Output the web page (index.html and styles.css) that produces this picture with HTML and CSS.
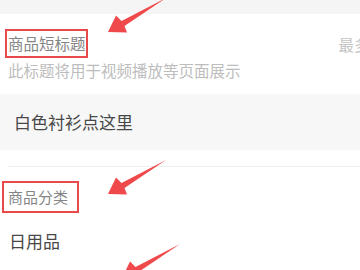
FILE: index.html
```html
<!DOCTYPE html>
<html lang="zh-CN">
<head>
<meta charset="UTF-8">
<title>商品信息</title>
<link rel="stylesheet" href="styles.css">
</head>
<body>
<div class="topbar"></div>

<div class="field-head">
  <span class="label-box box-title">商品短标题</span>
  <span class="counter">最多20字</span>
</div>
<p class="hint">此标题将用于视频播放等页面展示</p>
<div class="input">白色衬衫点这里</div>

<div class="divider"></div>

<div class="field-head">
  <span class="label-box box-cat">商品分类</span>
</div>
<div class="value">日用品</div>
<div class="bottombar"></div>

<svg class="arrow arrow-1" width="70" height="50" viewBox="-4 -40 70 50"><polygon points="0,0 8,-16.5 13.5,-11 58,-34 16.5,-6 19,0.5"/></svg>
<svg class="arrow arrow-2" width="70" height="50" viewBox="-4 -40 70 50"><polygon points="0,0 8,-16.5 13.5,-11 58,-34 16.5,-6 19,0.5"/></svg>
<svg class="arrow arrow-3" width="70" height="50" viewBox="-4 -40 70 50"><polygon points="0,0 8,-16.5 13.5,-11 58,-34 16.5,-6 19,0.5"/></svg>
</body>
</html>
```

FILE: styles.css
```css
body {
  margin: 0;
  width: 360px;
  height: 270px;
  overflow: hidden;
  position: relative;
  background: #fff;
  font-family: "Noto Sans CJK SC", "Noto Sans", sans-serif;
}
.topbar {
  height: 14px;
  background: #f5f5f5;
}
.field-head {
  display: flex;
  align-items: center;
  overflow: hidden;
}
.label-box {
  display: inline-block;
  border: 2px solid #e8494b;
  height: 25px;
  line-height: 25px;
  font-size: 15.5px;
  color: #858585;
  white-space: nowrap;
}
.box-title {
  margin: 15px 0 0 5px;
  width: 79px;
  padding-left: 1px;
}
.counter {
  flex-shrink: 0;
  margin: 15px 0 0 251px;
  font-size: 15.5px;
  color: #c4c4c4;
  white-space: nowrap;
}
.hint {
  margin: 2px 0 0 8px;
  font-size: 15.5px;
  line-height: 20px;
  color: #bdbdbd;
  white-space: nowrap;
}
.input {
  margin-top: 14px;
  height: 56px;
  line-height: 56px;
  padding-left: 14px;
  background: #f7f7f7;
  font-size: 17px;
  color: #484848;
}
.divider {
  margin: 16px 0 0 8px;
  height: 1px;
  background: #efefef;
}
.box-cat {
  margin: 14px 0 0 2px;
  width: 69px;
  height: 28px;
  line-height: 28px;
  padding-left: 4px;
  font-size: 15px;
}
.value {
  margin: 17px 0 0 9px;
  font-size: 17px;
  line-height: 22px;
  color: #484848;
}
.bottombar {
  margin-top: 18px;
  height: 6px;
  background: #f5f5f5;
}
.arrow {
  position: absolute;
  fill: #f0494b;
}
.arrow-1 { left: 104px; top: -8px; }
.arrow-2 { left: 104px; top: 154px; }
.arrow-3 { left: 118px; top: 238px; }
```
